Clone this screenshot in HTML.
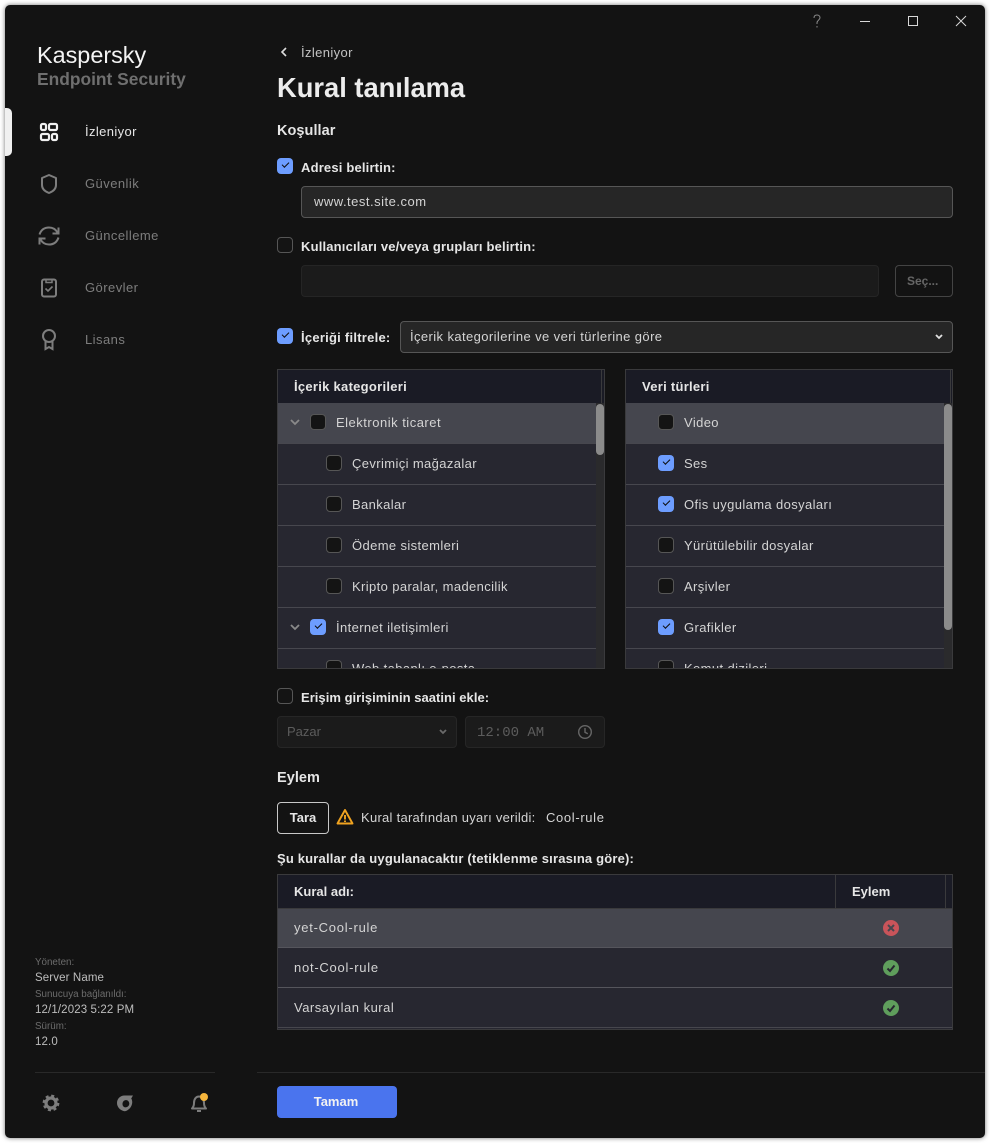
<!DOCTYPE html>
<html lang="tr"><head><meta charset="utf-8"><title>Kural tanılama</title>
<style>
html,body{margin:0;padding:0;width:990px;height:1143px;background:#fff;overflow:hidden}
body{font-family:"Liberation Sans",sans-serif;position:relative}
#w{position:absolute;left:5px;top:5px;width:980px;height:1133px;background:#131313;border-radius:5px;box-shadow:0 0 5px rgba(0,0,0,.55)}
#r{position:absolute;left:0;top:0;width:990px;height:1143px}
#r div,#r svg{position:absolute}
.t{white-space:nowrap;line-height:20px;height:20px;font-size:13px;color:#d4d4d4;letter-spacing:.38px;margin-top:1px}
.b{font-weight:bold;color:#e6e6e6;letter-spacing:.18px}
.n{color:#7d7d7d;letter-spacing:.45px}
.s{font-size:9.800px;color:#6c6c6c;letter-spacing:0}
.v{font-size:11.500px;color:#bdbdbd;letter-spacing:.12px}
.c{width:14px;height:14px;background:#141414;border:1px solid #565656;border-radius:4px}
.k{width:16px;height:16px;background:#6d9dff;border-radius:4px}
.k:after{content:"";position:absolute;left:4.700px;top:3.800px;width:6px;height:3px;border-left:1.900px solid #0c0c0c;border-bottom:1.900px solid #0c0c0c;transform:rotate(-45deg)}
.tb{overflow:hidden;background:#272730;border:1px solid #3a3a3c;box-sizing:border-box}
.h{background:#1a1b25}
.l{height:1px;background:#47474e}
</style></head><body>
<div id="w"></div>
<div id="r">
<div style="left:5px;top:108px;width:7px;height:48px;background:#f0f0f0;border-radius:0 5px 5px 0"></div>
<div class="t" style="left:37px;top:42px;font-size:23.400px;line-height:24px;height:24px;color:#f4f4f4;letter-spacing:0">Kaspersky</div>
<div class="t" style="left:37px;top:68px;font-size:17.400px;font-weight:bold;color:#6f6f6f;letter-spacing:0">Endpoint Security</div>

<svg style="left:38px;top:122px" width="22" height="20" fill="none" stroke="#f0f0f0" stroke-width="2.200"><rect x="3" y="2" width="5" height="6" rx="1.500"/><rect x="11" y="2" width="8" height="6" rx="1.500"/><rect x="3" y="12" width="8" height="6" rx="1.500"/><rect x="14" y="12" width="5" height="6" rx="1.500"/></svg>
<svg style="left:38px;top:173px" width="22" height="22" fill="none" stroke="#7d7d7d" stroke-width="2"><path d="M11 2l7 3v7c0 4-3 6.500-7 8-4-1.500-7-4-7-8V5z" stroke-linejoin="round"/></svg>
<svg style="left:37px;top:224px" width="24" height="24" fill="none" stroke="#7d7d7d" stroke-width="2"><path d="M2.500 10.500C4 6 7.500 3.500 12 3.500c3.500 0 6.500 1.500 8.500 5M21.500 13.500C20 18 16.500 20.500 12 20.500c-3.500 0-6.500-1.500-8.500-5"/><path d="M21.500 3.500V9.500H15.500M2.500 20.500V14.500H8.500"/></svg>
<svg style="left:38px;top:277px" width="22" height="22" fill="none" stroke="#7d7d7d" stroke-width="2"><rect x="4" y="2.500" width="14" height="17" rx="2"/><path d="M8 3v2.500h6V3" stroke-width="1.500"/><path d="M7.500 11.500l2.500 2.500 4.500-4.500" stroke-width="1.600"/></svg>
<svg style="left:38px;top:328px" width="22" height="23" fill="none" stroke="#7d7d7d" stroke-width="2"><circle cx="11" cy="8" r="6"/><path d="M7.500 13.500V21l3.500-2 3.500 2v-7.500"/></svg>
<div class="t" style="left:85px;top:121px;color:#e6e6e6">İzleniyor</div>
<div class="t n" style="left:85px;top:173px">Güvenlik</div>
<div class="t n" style="left:85px;top:225px">Güncelleme</div>
<div class="t n" style="left:85px;top:277px">Görevler</div>
<div class="t n" style="left:85px;top:329px">Lisans</div>

<div class="t s" style="left:35px;top:952px">Yöneten:</div>
<div class="t v" style="left:35px;top:967px">Server Name</div>
<div class="t s" style="left:35px;top:984px">Sunucuya bağlanıldı:</div>
<div class="t v" style="left:35px;top:999px">12/1/2023 5:22 PM</div>
<div class="t s" style="left:35px;top:1016px">Sürüm:</div>
<div class="t v" style="left:35px;top:1031px">12.0</div>
<div style="left:35px;top:1072px;width:180px;height:1px;background:#292929"></div>
<div style="left:257px;top:1072px;width:728px;height:1px;background:#292929"></div>
<svg style="left:41px;top:1093px" width="20" height="20" fill="none" stroke="#7d7d7d"><circle cx="10" cy="10" r="5" stroke-width="3.200"/><circle cx="10" cy="10" r="7.200" stroke-width="2.400" stroke-dasharray="3 2.650"/></svg>
<svg style="left:115px;top:1093px" width="20" height="20" fill="#7d7d7d"><path d="M2 10c0-4 3-7.500 7.500-7.500H18l-1.800 3c1 1.500 1.300 3.500.8 5.500-.8 3.500-3.500 6-6 7-1 .3-2 .2-2.500 0C5 17 2 14 2 10zm5.500 1c0 2.500 2 4 4.500 3 2-.8 2.800-3 2-4.800-.7-1.700-2.500-2.400-4-1.900-1.500.4-2.500 2-2.500 3.700z"/></svg>
<svg style="left:189px;top:1091px" width="22" height="22" fill="none" stroke="#7d7d7d" stroke-width="2"><path d="M3 17.500c1.500-1.500 2-3 2-5.500 0-4 2-6.500 5-6.500s5 2.500 5 6.500c0 2.500.5 4 2 5.500z" stroke-linejoin="round"/><path d="M8 20h4"/><circle cx="15" cy="6" r="4" fill="#f5b53c" stroke="none"/></svg>

<svg style="left:810px;top:13px" width="14" height="16" fill="none" stroke="#8a8a8a" stroke-width="1"><path d="M4 5c0-2 1.300-3 3-3s3 1 3 2.800c0 2.200-3 2.600-3 5V11M7 13v1.500"/></svg>
<div style="left:860px;top:21px;width:10px;height:1px;background:#d8d8d8"></div>
<div style="left:908px;top:16px;width:8px;height:8px;border:1px solid #d8d8d8"></div>
<svg style="left:955px;top:15px" width="12" height="12" stroke="#d8d8d8" stroke-width="1"><path d="M1 1l10 10M11 1L1 11"/></svg>

<svg style="left:279px;top:46px" width="10" height="12" fill="none" stroke="#dcdcdc" stroke-width="1.600"><path d="M7 2L3 6l4 4"/></svg>
<div class="t" style="left:301px;top:42px;color:#c4c4c4">İzleniyor</div>
<div class="t" style="left:277px;top:71px;font-size:27.300px;line-height:32px;height:32px;font-weight:bold;color:#ececec;letter-spacing:0">Kural tanılama</div>
<div class="t b" style="left:277px;top:120px;font-size:14.500px;letter-spacing:.05px">Koşullar</div>

<div class="k" style="left:277px;top:158px"></div>
<div class="t b" style="left:301px;top:157px">Adresi belirtin:</div>
<div style="left:301px;top:186px;width:650px;height:30px;background:#262626;border:1px solid #565656;border-radius:4px"></div>
<div class="t" style="left:314px;top:191px;letter-spacing:.5px">www.test.site.com</div>
<div class="c" style="left:277px;top:237px"></div>
<div class="t b" style="left:301px;top:236px">Kullanıcıları ve/veya grupları belirtin:</div>
<div style="left:301px;top:265px;width:576px;height:30px;background:#1b1b1b;border:1px solid #252525;border-radius:4px"></div>
<div style="left:895px;top:265px;width:56px;height:30px;border:1px solid #444;border-radius:4px"></div>
<div class="t" style="left:907px;top:270px;font-size:12px;font-weight:bold;color:#666;letter-spacing:0">Seç...</div>
<div class="k" style="left:277px;top:328px"></div>
<div class="t b" style="left:301px;top:327px;letter-spacing:.25px">İçeriği filtrele:</div>
<div style="left:400px;top:321px;width:551px;height:30px;background:#262626;border:1px solid #565656;border-radius:4px"></div>
<div class="t" style="left:410px;top:326px;letter-spacing:.4px">İçerik kategorilerine ve veri türlerine göre</div>
<svg style="left:934px;top:333px" width="10" height="8" fill="none" stroke="#e0e0e0" stroke-width="1.800"><path d="M2 2l3 3 3-3"/></svg>

<!-- Table 1 -->
<div class="tb" style="left:277px;top:369px;width:328px;height:300px">
 <div class="h" style="left:0;top:0;width:326px;height:33px"></div>
 <div style="left:323px;top:0;width:1px;height:33px;background:#3a3a3c"></div>
 <div style="left:0;top:33px;width:326px;height:40px;background:#45464e"></div>
 <div class="l" style="left:0;top:73px;width:326px"></div>
 <div class="l" style="left:0;top:114px;width:318px"></div>
 <div class="l" style="left:0;top:155px;width:318px"></div>
 <div class="l" style="left:0;top:196px;width:318px"></div>
 <div class="l" style="left:0;top:237px;width:318px"></div>
 <div class="l" style="left:0;top:278px;width:318px"></div>
 <div style="left:318px;top:33px;width:8px;height:265px;background:#2a2a2c"></div>
 <div style="left:318px;top:34px;width:8px;height:51px;background:#8b8b8b;border-radius:4px"></div>
 <div class="t b" style="left:16px;top:6px;letter-spacing:.28px">İçerik kategorileri</div>
 <svg style="left:11px;top:48px" width="12" height="10" fill="none" stroke="#8a8a8a" stroke-width="1.800"><path d="M2 2l4 4 4-4"/></svg>
 <div class="c" style="left:32px;top:44px"></div><div class="t" style="left:58px;top:42px;letter-spacing:.5px">Elektronik ticaret</div>
 <div class="c" style="left:48px;top:85px"></div><div class="t" style="left:74px;top:83px">Çevrimiçi mağazalar</div>
 <div class="c" style="left:48px;top:126px"></div><div class="t" style="left:74px;top:124px">Bankalar</div>
 <div class="c" style="left:48px;top:167px"></div><div class="t" style="left:74px;top:165px">Ödeme sistemleri</div>
 <div class="c" style="left:48px;top:208px"></div><div class="t" style="left:74px;top:206px">Kripto paralar, madencilik</div>
 <svg style="left:11px;top:253px" width="12" height="10" fill="none" stroke="#8a8a8a" stroke-width="1.800"><path d="M2 2l4 4 4-4"/></svg>
 <div class="k" style="left:32px;top:249px"></div><div class="t" style="left:58px;top:247px">İnternet iletişimleri</div>
 <div class="c" style="left:48px;top:290px"></div><div class="t" style="left:74px;top:288px">Web tabanlı e-posta</div>
</div>

<!-- Table 2 -->
<div class="tb" style="left:625px;top:369px;width:328px;height:300px">
 <div class="h" style="left:0;top:0;width:326px;height:33px"></div>
 <div style="left:324px;top:0;width:1px;height:33px;background:#3a3a3c"></div>
 <div style="left:0;top:33px;width:326px;height:40px;background:#45464e"></div>
 <div class="l" style="left:0;top:73px;width:326px"></div>
 <div class="l" style="left:0;top:114px;width:318px"></div>
 <div class="l" style="left:0;top:155px;width:318px"></div>
 <div class="l" style="left:0;top:196px;width:318px"></div>
 <div class="l" style="left:0;top:237px;width:318px"></div>
 <div class="l" style="left:0;top:278px;width:318px"></div>
 <div style="left:318px;top:33px;width:8px;height:265px;background:#2a2a2c"></div>
 <div style="left:318px;top:34px;width:8px;height:226px;background:#8b8b8b;border-radius:4px"></div>
 <div class="t b" style="left:16px;top:6px;letter-spacing:.28px">Veri türleri</div>
 <div class="c" style="left:32px;top:44px"></div><div class="t" style="left:58px;top:42px">Video</div>
 <div class="k" style="left:32px;top:85px"></div><div class="t" style="left:58px;top:83px">Ses</div>
 <div class="k" style="left:32px;top:126px"></div><div class="t" style="left:58px;top:124px">Ofis uygulama dosyaları</div>
 <div class="c" style="left:32px;top:167px"></div><div class="t" style="left:58px;top:165px">Yürütülebilir dosyalar</div>
 <div class="c" style="left:32px;top:208px"></div><div class="t" style="left:58px;top:206px">Arşivler</div>
 <div class="k" style="left:32px;top:249px"></div><div class="t" style="left:58px;top:247px">Grafikler</div>
 <div class="c" style="left:32px;top:290px"></div><div class="t" style="left:58px;top:288px">Komut dizileri</div>
</div>

<div class="c" style="left:277px;top:688px"></div>
<div class="t b" style="left:301px;top:687px;letter-spacing:.03px">Erişim girişiminin saatini ekle:</div>
<div style="left:277px;top:716px;width:178px;height:30px;background:#1b1b1b;border:1px solid #262626;border-radius:4px"></div>
<div class="t" style="left:287px;top:721px;color:#5c5c5c;letter-spacing:0">Pazar</div>
<svg style="left:438px;top:728px" width="10" height="8" fill="none" stroke="#6a6a6a" stroke-width="1.800"><path d="M2 2l3 3 3-3"/></svg>
<div style="left:465px;top:716px;width:138px;height:30px;background:#1b1b1b;border:1px solid #262626;border-radius:4px"></div>
<div class="t" style="left:477px;top:722px;font-family:'Liberation Mono',monospace;font-size:14px;color:#5c5c5c;letter-spacing:0">12:00 AM</div>
<svg style="left:577px;top:724px" width="16" height="16" fill="none" stroke="#666" stroke-width="1.400"><circle cx="8" cy="8" r="6.300"/><path d="M8 4v4.300l2.800 1.500"/></svg>

<div class="t b" style="left:277px;top:767px;font-size:14.500px;letter-spacing:.05px">Eylem</div>
<div style="left:277px;top:802px;width:50px;height:30px;border:1px solid #c8c8c8;border-radius:4px"></div>
<div class="t b" style="left:277px;top:807px;width:52px;text-align:center;letter-spacing:0">Tara</div>
<svg style="left:336px;top:808px" width="18" height="18" fill="none" stroke="#f0a320" stroke-width="1.900"><path d="M9 2L1.500 15.500h15z" stroke-linejoin="round"/><path d="M9 7v4.500M9 12.500v1.500"/></svg>
<div class="t" style="left:361px;top:807px;letter-spacing:.27px">Kural tarafından uyarı verildi:</div>
<div class="t" style="left:546px;top:807px;letter-spacing:.65px">Cool-rule</div>
<div class="t b" style="left:277px;top:848px">Şu kurallar da uygulanacaktır (tetiklenme sırasına göre):</div>

<!-- Table 3 -->
<div class="tb" style="left:277px;top:874px;width:676px;height:156px">
 <div class="h" style="left:0;top:0;width:674px;height:33px"></div>
 <div style="left:557px;top:0;width:1px;height:33px;background:#3a3a3c"></div>
 <div style="left:667px;top:0;width:1px;height:33px;background:#3a3a3c"></div>
 <div style="left:0;top:34px;width:674px;height:38px;background:#45464e"></div>
 <div class="l" style="left:0;top:33px;width:674px;background:#3a3a3c"></div>
 <div class="l" style="left:0;top:72px;width:674px;background:#55555c"></div>
 <div class="l" style="left:0;top:112px;width:674px;background:#55555c"></div>
 <div class="l" style="left:0;top:152px;width:674px"></div>
 <div class="t b" style="left:16px;top:6px;letter-spacing:0">Kural adı:</div>
 <div class="t b" style="left:574px;top:6px;letter-spacing:0">Eylem</div>
 <div class="t" style="left:16px;top:42px;letter-spacing:.75px">yet-Cool-rule</div>
 <div class="t" style="left:16px;top:82px;letter-spacing:.75px">not-Cool-rule</div>
 <div class="t" style="left:16px;top:122px;letter-spacing:.5px">Varsayılan kural</div>
</div>
<svg style="left:883px;top:920px" width="16" height="16"><circle cx="8" cy="8" r="8" fill="#c9545a"/><path d="M5 5l6 6M11 5l-6 6" stroke="#45464e" stroke-width="2"/></svg>
<svg style="left:883px;top:960px" width="16" height="16"><circle cx="8" cy="8" r="8" fill="#5f9e5c"/><path d="M4.500 8.500l2.500 2.500 4.500-5.500" fill="none" stroke="#272730" stroke-width="2"/></svg>
<svg style="left:883px;top:1000px" width="16" height="16"><circle cx="8" cy="8" r="8" fill="#5f9e5c"/><path d="M4.500 8.500l2.500 2.500 4.500-5.500" fill="none" stroke="#272730" stroke-width="2"/></svg>

<div style="left:277px;top:1086px;width:120px;height:32px;background:#4a74ee;border-radius:4px"></div>
<div class="t" style="left:276px;top:1091px;width:120px;text-align:center;font-weight:bold;color:#f2f2f2;letter-spacing:0">Tamam</div>
</div>
</body></html>
